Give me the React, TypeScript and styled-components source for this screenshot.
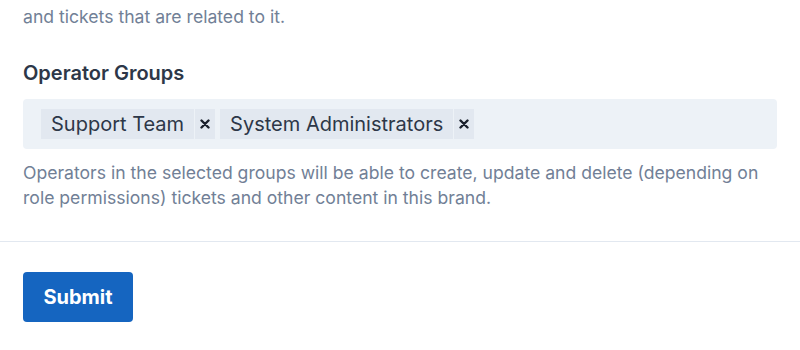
import styled, { createGlobalStyle } from "styled-components";

const GlobalStyle = createGlobalStyle`
  body {
    margin: 0;
    background: #fff;
    font-family: Inter, "Noto Sans", sans-serif;
  }
`;

const Page = styled.main`
  display: flex;
  flex-direction: column;
  padding-top: 4px;
`;

const Section = styled.section`
  display: flex;
  flex-direction: column;
  padding: 0 23px;
`;

const Help = styled.p<{ $top?: number }>`
  margin: ${(p) => p.$top ?? 0}px 0 0;
  font-size: 17.6px;
  line-height: 25px;
  color: #718096;
`;

const Label = styled.label`
  margin-top: 30px;
  font-size: 20px;
  font-weight: 600;
  line-height: 28px;
  color: #2d3748;
`;

const Select = styled.div`
  display: flex;
  align-items: center;
  gap: 5px;
  margin-top: 12px;
  height: 50px;
  box-sizing: border-box;
  padding: 0 18px;
  background: #edf2f7;
  border-radius: 4px;
`;

const Tag = styled.div`
  display: flex;
  gap: 1px;
  height: 30px;
`;

const TagLabel = styled.span`
  display: flex;
  align-items: center;
  padding: 0 10px;
  background: #e2e8f0;
  font-size: 20px;
  color: #2d3748;
`;

const Remove = styled.button`
  display: flex;
  align-items: center;
  justify-content: center;
  width: 20px;
  padding: 0;
  border: none;
  background: #e2e8f0;
  color: #1a202c;
  cursor: pointer;
`;

const Divider = styled.hr`
  margin: 31px 0 0;
  border: none;
  border-top: 1px solid #e2e8f0;
`;

const Footer = styled.div`
  display: flex;
  padding: 30px 23px;
`;

const SubmitBtn = styled.button`
  width: 110px;
  height: 50px;
  border: none;
  border-radius: 4px;
  background: #1565c0;
  color: #fff;
  font-family: inherit;
  font-size: 20px;
  font-weight: 700;
  cursor: pointer;
`;

const groups = ["Support Team", "System Administrators"];

function Cross() {
  return (
    <svg width="10" height="10" viewBox="0 0 10 10">
      <path d="M1.5 1.5l7 7M8.5 1.5l-7 7" stroke="currentColor" strokeWidth="2.4" strokeLinecap="round" />
    </svg>
  );
}

function App() {
  return (
    <>
      <GlobalStyle />
      <Page>
        <Section>
          <Help>and tickets that are related to it.</Help>
          <Label>Operator Groups</Label>
          <Select>
            {groups.map((g) => (
              <Tag key={g}>
                <TagLabel>{g}</TagLabel>
                <Remove aria-label={`Remove ${g}`}>
                  <Cross />
                </Remove>
              </Tag>
            ))}
          </Select>
          <Help $top={11}>
            Operators in the selected groups will be able to create, update and delete (depending on
            role permissions) tickets and other content in this brand.
          </Help>
        </Section>
        <Divider />
        <Footer>
          <SubmitBtn>Submit</SubmitBtn>
        </Footer>
      </Page>
    </>
  );
}

export default App;
